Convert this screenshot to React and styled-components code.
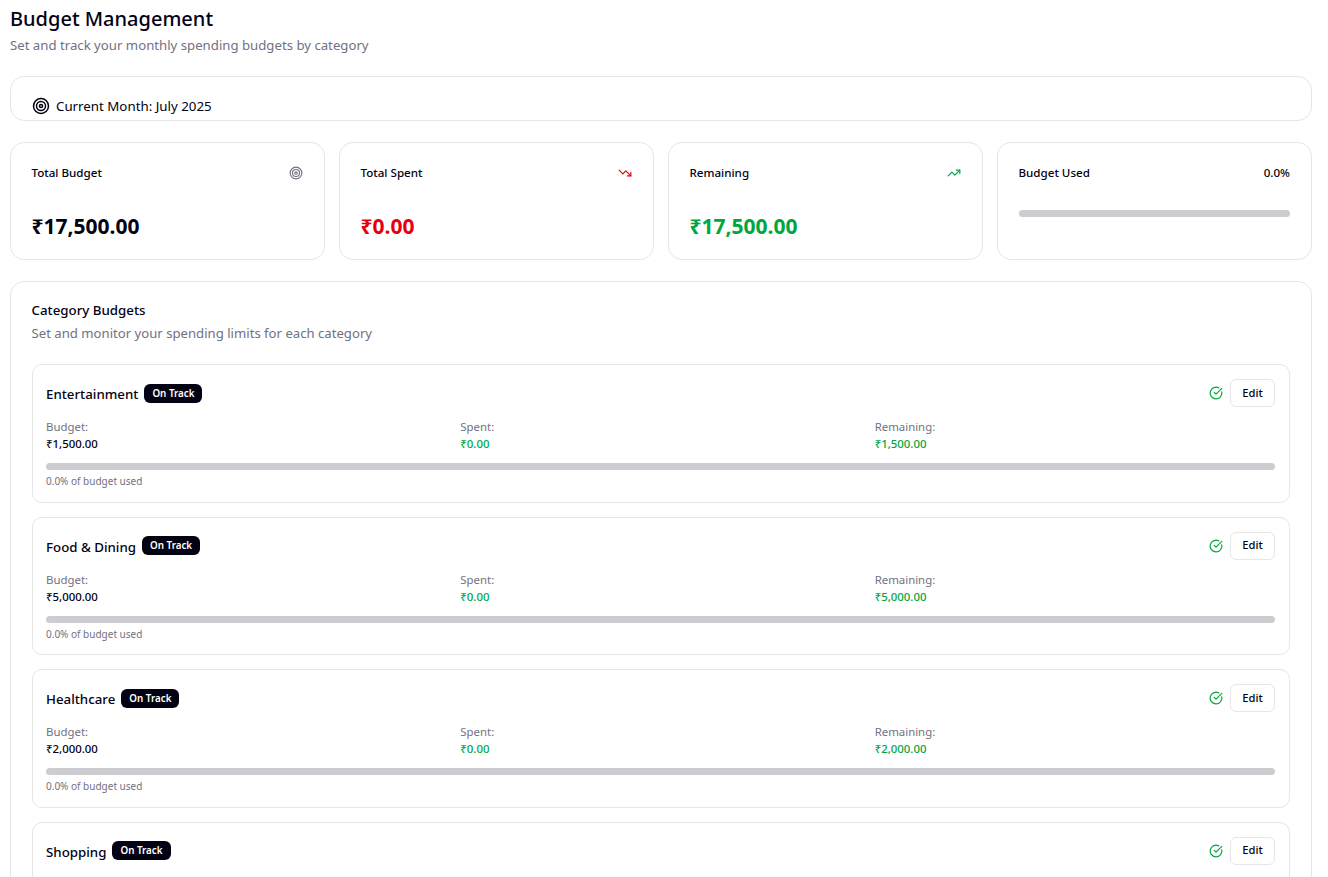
import React from 'react';
import styled, { createGlobalStyle } from 'styled-components';
import { Target, TrendingDown, TrendingUp, CircleCheckBig } from 'lucide-react';

const GlobalStyle = createGlobalStyle`
  html, body {
    margin: 0;
    height: 877px;
    overflow: hidden;
    background: #fff;
  }
  body {
    font-family: "Noto Sans", "Open Sans", sans-serif;
    color: #030213;
  }
`;

const Page = styled.div`
  display: flex;
  flex-direction: column;
  padding: 0 16px 0 10px;
`;

const Title = styled.h1`
  margin: 5px 0 0;
  font-size: 20px;
  line-height: 27px;
  font-weight: 500;
`;

const Subtitle = styled.p`
  margin: 4px 0 0;
  font-size: 13.2px;
  line-height: 18px;
  color: #717182;
`;

const Card = styled.div`
  background: #fff;
  border: 1px solid #e6e6e6;
  border-radius: 14px;
  box-sizing: border-box;
`;

const MonthCard = styled(Card)`
  margin-top: 22px;
  height: 45px;
  padding: 14px 21px 0;
  display: flex;
  align-items: center;
  gap: 6px;
  font-size: 13.3px;
  line-height: 18px;
`;

const StatGrid = styled.div`
  margin-top: 21px;
  display: grid;
  grid-template-columns: repeat(4, 1fr);
  gap: 14px;
`;

const StatCard = styled(Card)`
  height: 118px;
  padding: 21px 21px 0 20.5px;
`;

const StatHead = styled.div`
  display: flex;
  justify-content: space-between;
  align-items: center;
  height: 17px;
  font-size: 11.6px;
  font-weight: 500;
`;

const StatValue = styled.div`
  margin-top: 31px;
  font-size: 21px;
  line-height: 28px;
  font-weight: 700;
  color: ${p => p.$color || '#030213'};
`;

const Track = styled.div`
  height: 7px;
  border-radius: 4px;
  background: #cdccd0;
`;

const StatTrack = styled(Track)`
  margin-top: 29px;
`;

const Panel = styled(Card)`
  margin-top: 21px;
  padding: 19px 21px 20px 20.5px;
`;

const PanelTitle = styled.div`
  font-size: 13.3px;
  line-height: 18px;
  font-weight: 500;
`;

const PanelText = styled.div`
  margin-top: 5px;
  font-size: 13.15px;
  line-height: 18px;
  color: #717182;
`;

const List = styled.div`
  margin-top: 22px;
  display: flex;
  flex-direction: column;
  gap: 14px;
`;

const Item = styled.div`
  border: 1px solid #e6e6e6;
  border-radius: 10px;
  height: 138.67px;
  box-sizing: border-box;
  padding: 14px 14px 14px 13.5px;
`;

const ItemHead = styled.div`
  display: flex;
  justify-content: space-between;
  align-items: center;
  height: 28px;
`;

const NameRow = styled.div`
  display: flex;
  align-items: center;
  gap: 6px;
`;

const Name = styled.span`
  font-size: 13.3px;
  font-weight: 500;
  position: relative;
  top: 1px;
`;

const Badge = styled.span`
  background: #030213;
  color: #fff;
  border-radius: 6px;
  padding: 0 8px;
  height: 19px;
  line-height: 19px;
  font-size: 9.8px;
  font-weight: 600;
`;

const Actions = styled.div`
  display: flex;
  align-items: center;
  gap: 7px;
`;

const EditButton = styled.button`
  width: 45px;
  height: 28px;
  padding: 0 0 2px;
  background: #fff;
  border: 1px solid #e6e6e6;
  border-radius: 6px;
  font-family: inherit;
  font-size: 11.2px;
  font-weight: 500;
  color: #030213;
`;

const Figures = styled.div`
  margin-top: 11px;
  display: grid;
  grid-template-columns: repeat(3, 1fr);
  gap: 14px;
`;

const FigureLabel = styled.div`
  font-size: 11.4px;
  line-height: 17px;
  color: #717182;
`;

const FigureValue = styled.div`
  font-size: 11.4px;
  line-height: 17px;
  font-weight: 500;
  color: ${p => p.$color || '#030213'};
`;

const ItemTrack = styled(Track)`
  margin-top: 11px;
`;

const Note = styled.div`
  margin-top: 4px;
  font-size: 10px;
  line-height: 14px;
  color: #717182;
`;

const GREEN = '#00a63e';
const RED = '#e7000b';

const categories = [
  { name: 'Entertainment', budget: '₹1,500.00' },
  { name: 'Food & Dining', budget: '₹5,000.00' },
  { name: 'Healthcare', budget: '₹2,000.00' },
  { name: 'Shopping', budget: '₹3,000.00' }
];

export default function App() {
  return (
    <Page>
      <GlobalStyle />
      <Title>Budget Management</Title>
      <Subtitle>Set and track your monthly spending budgets by category</Subtitle>

      <MonthCard>
        <Target size={18} strokeWidth={2} />
        Current Month: July 2025
      </MonthCard>

      <StatGrid>
        <StatCard>
          <StatHead>
            Total Budget
            <Target size={14} color="#717182" />
          </StatHead>
          <StatValue>₹17,500.00</StatValue>
        </StatCard>
        <StatCard>
          <StatHead>
            Total Spent
            <TrendingDown size={14} color={RED} />
          </StatHead>
          <StatValue $color={RED}>₹0.00</StatValue>
        </StatCard>
        <StatCard>
          <StatHead>
            Remaining
            <TrendingUp size={14} color={GREEN} />
          </StatHead>
          <StatValue $color={GREEN}>₹17,500.00</StatValue>
        </StatCard>
        <StatCard>
          <StatHead>
            Budget Used
            <span>0.0%</span>
          </StatHead>
          <StatTrack />
        </StatCard>
      </StatGrid>

      <Panel>
        <PanelTitle>Category Budgets</PanelTitle>
        <PanelText>Set and monitor your spending limits for each category</PanelText>
        <List>
          {categories.map(c => (
            <Item key={c.name}>
              <ItemHead>
                <NameRow>
                  <Name>{c.name}</Name>
                  <Badge>On Track</Badge>
                </NameRow>
                <Actions>
                  <CircleCheckBig size={14} color={GREEN} />
                  <EditButton>Edit</EditButton>
                </Actions>
              </ItemHead>
              <Figures>
                <div>
                  <FigureLabel>Budget:</FigureLabel>
                  <FigureValue>{c.budget}</FigureValue>
                </div>
                <div>
                  <FigureLabel>Spent:</FigureLabel>
                  <FigureValue $color={GREEN}>₹0.00</FigureValue>
                </div>
                <div>
                  <FigureLabel>Remaining:</FigureLabel>
                  <FigureValue $color={GREEN}>{c.budget}</FigureValue>
                </div>
              </Figures>
              <ItemTrack />
              <Note>0.0% of budget used</Note>
            </Item>
          ))}
        </List>
      </Panel>
    </Page>
  );
}
